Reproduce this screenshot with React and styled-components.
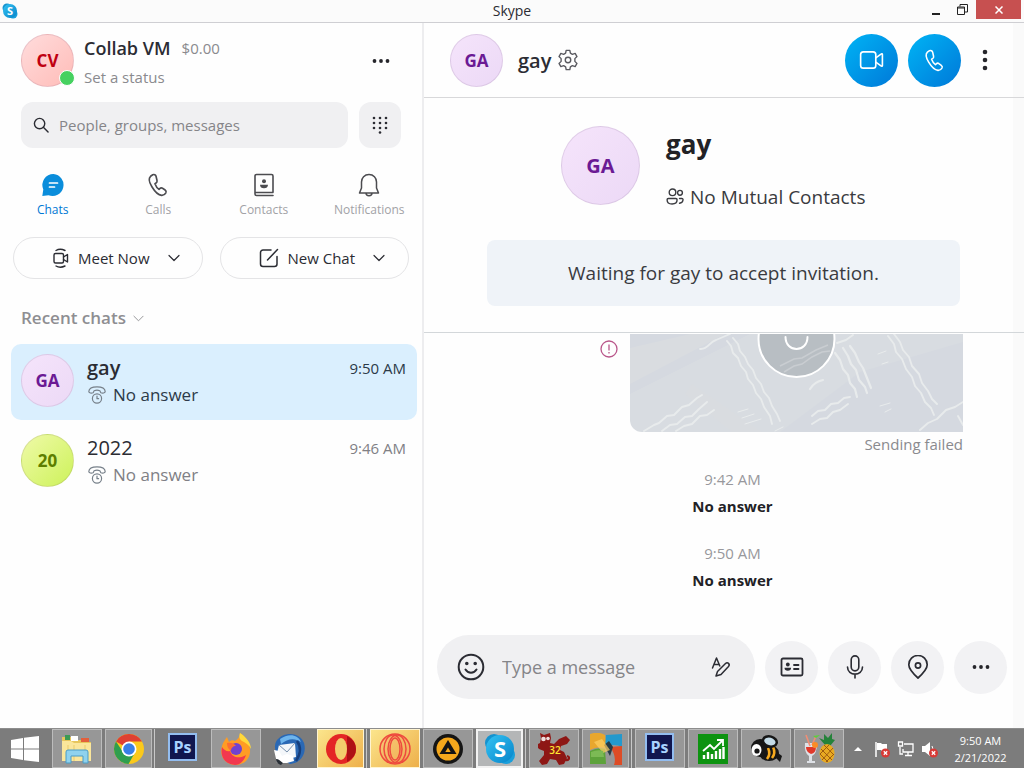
import React from "react";
import styled, { createGlobalStyle, css } from "styled-components";

const GlobalStyle = createGlobalStyle`
  *, *::before, *::after { box-sizing: border-box; }
  body {
    margin: 0;
    background: #fdfdfd;
    color: #2b2c33;
    font-family: "Open Sans", "Noto Sans", sans-serif;
    font-size: 14px;
  }
  button, input { font: inherit; color: inherit; }
  button { background: none; border: 0; padding: 0; cursor: pointer; }
  h1, h2, h3, p { margin: 0; font-weight: 400; }
  svg { display: block; flex: none; }
`;

const Desktop = styled.div`
  display: flex;
  flex-direction: column;
  min-height: 100vh;
`;

/* ---------- window frame ---------- */

const TitleBar = styled.header`
  display: grid;
  grid-template-columns: 1fr auto 1fr;
  align-items: center;
  height: 23px;
  background: #fbfbfb;
  border-bottom: 1px solid #cfcfd3;
`;
const AppMark = styled.div`
  padding-left: 2px;
`;
const WindowTitle = styled.h1`
  font-size: 14px;
  line-height: 22px;
`;
const WindowControls = styled.div`
  display: flex;
  justify-content: flex-end;
  align-self: start;
  padding-right: 3px;
`;
const WindowButton = styled.button`
  display: flex;
  align-items: center;
  justify-content: center;
  width: ${(p) => (p.$close ? 45 : 27)}px;
  height: 19px;
  color: ${(p) => (p.$close ? "#fff" : "#222")};
  background: ${(p) => (p.$close ? "#c75050" : "none")};
`;

const Workspace = styled.div`
  flex: 1;
  display: grid;
  grid-template-columns: 424px minmax(0, 1fr);
`;

/* ---------- shared ---------- */

const tones = {
  red: css`
    background: linear-gradient(135deg, #ffdcdc, #ffbcb8);
    color: #bf0011;
  `,
  purple: css`
    background: linear-gradient(135deg, #f5e4fb, #ecd9f6);
    color: #6b1a94;
  `,
  lime: css`
    background: linear-gradient(135deg, #effaa8, #cdf25a);
    color: #5d7e00;
  `,
};
const Avatar = styled.div`
  position: relative;
  flex: none;
  display: flex;
  align-items: center;
  justify-content: center;
  width: ${(p) => (p.$large ? 79 : 53)}px;
  height: ${(p) => (p.$large ? 79 : 53)}px;
  border-radius: 50%;
  border: 1px solid rgba(90, 60, 110, 0.12);
  font-size: ${(p) => (p.$large ? 20 : 17)}px;
  font-weight: 700;
  ${(p) => tones[p.$tone]}
`;
const Presence = styled.span`
  position: absolute;
  right: -2px;
  bottom: 0;
  width: 16px;
  height: 16px;
  border-radius: 50%;
  border: 1px solid #fff;
  background: #46d160;
`;
const IconButton = styled.button`
  display: flex;
  align-items: center;
  justify-content: center;
  width: ${(p) => p.$w || 32}px;
  height: ${(p) => p.$h || 32}px;
`;

/* ---------- sidebar ---------- */

const Sidebar = styled.aside`
  border-right: 2px solid #ededef;
  background: #fefefe;
`;
const Profile = styled.div`
  display: flex;
  align-items: flex-start;
  gap: 10px;
  padding: 11px 25px 10px 21px;
`;
const ProfileText = styled.div`
  flex: 1;
`;
const ProfileName = styled.div`
  display: flex;
  align-items: center;
  gap: 11px;
  height: 28px;
  line-height: 28px;
  font-size: 15px;
  color: #8a8a8e;
`;
const Strong = styled.span`
  font-size: 18px;
  font-weight: 600;
  color: #2b2c33;
`;
const StatusButton = styled.button`
  display: block;
  line-height: 30px;
  font-size: 15px;
  color: #8a8a8e;
`;
const SearchRow = styled.form`
  display: flex;
  gap: 11px;
  padding: 0 21px;
`;
const SearchBox = styled.label`
  flex: 1;
  display: flex;
  align-items: center;
  gap: 10px;
  height: 46px;
  padding: 0 12px;
  border-radius: 12px;
  background: #f0f0f2;
`;
const TextInput = styled.input`
  flex: 1;
  min-width: 0;
  padding: 0;
  border: 0;
  outline: 0;
  background: none;
  font-size: ${(p) => (p.$large ? 18 : 15)}px;
  &::placeholder { color: #858589; opacity: 1; }
`;
const DialButton = styled(IconButton)`
  border-radius: 12px;
  background: #f0f0f2;
`;
const Tabs = styled.nav`
  display: grid;
  grid-template-columns: repeat(4, 1fr);
  padding-top: 25px;
`;
const Tab = styled.button`
  display: flex;
  flex-direction: column;
  align-items: center;
  gap: 4px;
  font-size: 12px;
  line-height: 18px;
  color: ${(p) => (p.$active ? "#0078d4" : "#a2a2a6")};
  svg { color: #4c4c50; }
`;
const Actions = styled.div`
  display: grid;
  grid-template-columns: 1fr 1fr;
  gap: 17px;
  padding: 18px 13px 0;
`;
const PillButton = styled.button`
  display: flex;
  align-items: center;
  justify-content: center;
  height: 42px;
  padding-left: 16px;
  border: 1px solid #e4e4e6;
  border-radius: 21px;
  font-size: 15px;
  gap: 8px;
  svg:last-child { margin-left: 10px; }
`;
const SectionButton = styled.button`
  display: flex;
  align-items: center;
  gap: 7px;
  margin: 26px 0 0 21px;
  line-height: 26px;
  font-size: 17px;
  font-weight: 600;
  color: #8e8e92;
`;
const ChatList = styled.ul`
  display: flex;
  flex-direction: column;
  gap: 4px;
  margin: 13px 5px 0 11px;
  padding: 0;
  list-style: none;
`;
const ChatRow = styled.button`
  display: flex;
  gap: 13px;
  width: 100%;
  height: 76px;
  padding: 10px 11px 0 10px;
  border-radius: 10px;
  text-align: left;
  color: ${(p) => (p.$active ? "#2c3a48" : "#808085")};
  background: ${(p) => (p.$active ? "#daeffe" : "none")};
`;
const ChatBody = styled.div`
  flex: 1;
`;
const ChatName = styled.div`
  font-size: 20px;
  line-height: 28px;
  font-weight: ${(p) => (p.$active ? 600 : 400)};
  color: #2b2c33;
`;
const ChatNote = styled.div`
  display: flex;
  align-items: center;
  gap: 7px;
  line-height: 25px;
  font-size: 17px;
  svg { color: #77808a; margin-left: 1px; }
`;
const ChatTime = styled.time`
  line-height: 28px;
  font-size: 15px;
`;

/* ---------- conversation ---------- */

const Conversation = styled.main`
  display: flex;
  flex-direction: column;
  background: linear-gradient(to left, #fafafa 11px, #fefefe 11px);
`;
const ChatHeader = styled.div`
  display: flex;
  align-items: center;
  gap: 10px;
  height: 75px;
  padding: 0 26px;
  border-bottom: 1px solid #d8d8da;
`;
const Contact = styled.h2`
  flex: 1;
  display: flex;
  align-items: center;
  gap: 6px;
  padding-left: 5px;
  font-size: 20px;
  font-weight: 600;
  svg { color: #5a5a60; }
`;
const CallButton = styled.button`
  display: flex;
  align-items: center;
  justify-content: center;
  width: 53px;
  height: 53px;
  border-radius: 50%;
  color: #fff;
  background: linear-gradient(135deg, #00b4f5, #0078d8);
`;
const Intro = styled.section`
  display: flex;
  flex-direction: column;
  gap: 26px;
  padding: 28px 64px 26px 63px;
  border-bottom: 1px solid #d3d7da;
`;
const IntroCard = styled.div`
  display: flex;
  gap: 26px;
  padding-left: 74px;
`;
const IntroName = styled.h2`
  font-size: 26px;
  line-height: 36px;
  font-weight: 700;
  color: #222226;
`;
const Mutual = styled.p`
  display: flex;
  align-items: center;
  gap: 6px;
  padding-top: 18px;
  font-size: 19px;
  line-height: 34px;
  color: #3a3b40;
`;
const Banner = styled.p`
  height: 66px;
  border-radius: 8px;
  background: #eff3f8;
  text-align: center;
  font-size: 19px;
  line-height: 66px;
  color: #3a3b40;
`;
const Messages = styled.section`
  flex: 1;
  padding: 1px 61px 0 0;
`;
const Failed = styled.div`
  display: flex;
  justify-content: flex-end;
  gap: 12px;
  svg:first-child { margin-top: 6px; }
`;
const MapCard = styled.div`
  width: 333px;
  height: 98px;
  overflow: hidden;
  border-bottom-left-radius: 12px;
  background: #d8dce1;
  && svg { margin-top: 0; }
`;
const FailedText = styled.p`
  text-align: right;
  font-size: 15px;
  line-height: 24px;
  color: #8a8a8e;
`;
const CallEvent = styled.div`
  padding: ${(p) => (p.$first ? 10 : 20)}px 0 0 78px;
  text-align: center;
  font-size: 15px;
  line-height: 27px;
  color: #98989c;
  strong { display: block; color: #222226; }
`;
const Composer = styled.form`
  display: flex;
  align-items: center;
  gap: 10px;
  padding: 0 17px 29px 13px;
`;
const MessageBox = styled.div`
  flex: 1;
  min-width: 0;
  display: flex;
  align-items: center;
  gap: 15px;
  height: 64px;
  padding: 0 18px;
  border-radius: 32px;
  background: #f0f0f2;
`;
const RoundButton = styled(IconButton)`
  width: 53px;
  height: 53px;
  border-radius: 50%;
  background: #f2f2f4;
`;

/* ---------- taskbar ---------- */

const Taskbar = styled.footer`
  display: flex;
  align-items: stretch;
  height: 40px;
  background: #7c7c7c;
  border-top: 1px solid #8d8d8d;
  color: #fff;
`;
const StartButton = styled.button`
  display: flex;
  align-items: center;
  justify-content: center;
  width: 50px;
  margin-right: 2px;
`;
const Apps = styled.div`
  display: flex;
  gap: 3px;
`;
const faces = {
  plain: css`
    background: transparent;
  `,
  open: css`
    background: #979797;
    border: 1px solid #bcbcbc;
  `,
  alert: css`
    background: linear-gradient(135deg, #fbe58c, #eeb04a);
    border: 1px solid #fff4d0;
  `,
  active: css`
    background: #b4b6b7;
    border: 2px solid #f2f2f2;
  `,
};
const AppSlot = styled.div`
  display: flex;
  width: 50px;
  ${(p) =>
    p.$stacked &&
    css`
      padding-right: 2px;
      border-right: 1px solid #c8c8c8;
    `}
`;
const AppButton = styled.button`
  flex: 1;
  display: flex;
  align-items: center;
  justify-content: center;
  ${(p) => faces[p.$face]}
`;
const Tray = styled.div`
  display: flex;
  align-items: center;
  gap: 6px;
  margin-left: auto;
  padding-right: 17px;
  svg:first-child { margin-right: 4px; }
`;
const Clock = styled.time`
  width: 53px;
  margin-left: 9px;
  white-space: nowrap;
  display: flex;
  flex-direction: column;
  align-items: center;
  font-size: 11px;
  line-height: 17px;
`;

/* ---------- icons ---------- */

const Line = ({ size = 24, w, h, box, sw = 1.5, children }) => (
  <svg width={w || size} height={h || size} viewBox={box || "0 0 24 24"} fill="none" stroke="currentColor"
    strokeWidth={sw} strokeLinecap="round" strokeLinejoin="round" aria-hidden="true">
    {children}
  </svg>
);
const handset =
  "M7.2 2.6 5.2 4C3.4 5.6 4 9.6 6.4 13.6c2.6 4.3 6 7.6 8.9 7.9 1.7.1 3.200-1 3.900-2.300.5-1 .1-2-.7-2.600l-2.300-1.600c-.8-.6-1.900-.4-2.600.3l-.7.7c-1.500-1-3-3.300-3.700-5.200l1-.6c.8-.5 1.100-1.400.9-2.300l-.9-3.900c-.3-1.200-1.700-2-3-1.400Z";
const HandsetIcon = ({ size, box }) => (
  <Line size={size} box={box}><path d={handset} /></Line>
);
const Dots = ({ vertical }) => (
  <svg width="22" height="22" viewBox="0 0 22 22" fill="#26262b" aria-hidden="true">
    {[3, 11, 19].map((c) => (
      <circle key={c} cx={vertical ? 11 : c} cy={vertical ? c : 11} r="2.3" />
    ))}
  </svg>
);
const SmallDots = () => (
  <svg width="20" height="20" viewBox="0 0 20 20" fill="#26262b" aria-hidden="true">
    {[3.5, 10, 16.5].map((c) => <circle key={c} cx={c} cy="10" r="1.9" />)}
  </svg>
);
const Chevron = ({ size = 12, sw = 1.2 }) => (
  <Line size={size} box="0 0 12 12" sw={sw}><path d="m1 3.500 5 5 5-5" /></Line>
);
const SkypeMark = ({ size }) => (
  <svg width={size} height={size} viewBox="0 0 32 32" aria-hidden="true">
    <defs>
      <linearGradient id="sky" x1="0" y1="0" x2="1" y2="1">
        <stop offset="0" stopColor="#35c3f3" />
        <stop offset="1" stopColor="#0583c9" />
      </linearGradient>
    </defs>
    <circle cx="10" cy="10" r="9" fill="#1593cf" />
    <circle cx="22" cy="22" r="9" fill="#1a9fdb" />
    <circle cx="16" cy="16" r="14" fill="url(#sky)" />
    <text x="16" y="24" textAnchor="middle" fontSize="22" fontWeight="700" fill="#fff">S</text>
  </svg>
);
const DialPad = () => (
  <svg width="16" height="18" viewBox="0 0 16 18" fill="#2b2c33" aria-hidden="true">
    {[2, 7, 12].map((y) => [2, 8, 14].map((x) => <circle key={`${x}-${y}`} cx={x} cy={y} r="1.300" />))}
    <circle cx="8" cy="16.500" r="1.300" />
  </svg>
);
const ChatsIcon = () => (
  <svg width="24" height="24" viewBox="0 0 24 24" aria-hidden="true">
    <path d="M12.500 1A11 11 0 1 1 7.500 22.200L1.300 23l1-6.500A11 11 0 0 1 12.500 1Z" fill="#0a8ddb" />
    <path d="M8.500 10h8M8.500 14h5" stroke="#fff" strokeWidth="1.700" strokeLinecap="round" />
  </svg>
);
const ContactsIcon = () => (
  <Line sw={1.6}>
    <path d="M21 19V3a1.500 1.500 0 0 0-1.500-1.500h-15A1.500 1.500 0 0 0 3 3v18a1.500 1.500 0 0 0 1.500 1.500H21M3 19.500h18" />
    <circle cx="12" cy="8.300" r="2" fill="currentColor" stroke="none" />
    <path d="M8 11.800h8c0 2.500-1.600 3.500-4 3.500s-4-1-4-3.500Z" fill="currentColor" stroke="none" />
  </Line>
);
const BellIcon = () => (
  <Line>
    <path d="M12 1.500c-4.500 0-7.500 3.500-7.500 7.500v6L2.500 20h19l-2-5V9c0-4-3-7.500-7.500-7.500ZM9 20c0 3.500 6 3.500 6 0" />
  </Line>
);
const MeetIcon = () => (
  <Line w={18} h={20} box="0 0 18 20" sw={1.4}>
    <rect x="2" y="5.500" width="9.500" height="9.500" rx="1.500" />
    <path d="m11.500 9 4-2.500v7.500l-4-2.500M4 2.500c2.500-1.500 6-1.500 9 0M4 18c2.500 1.500 6 1.500 9 0" />
  </Line>
);
const ComposeIcon = () => (
  <Line size={20} box="0 0 20 20" sw={1.5}>
    <path d="M12 2H4a2.500 2.500 0 0 0-2.500 2.500V16A2.500 2.500 0 0 0 4 18.500h11.500A2.500 2.500 0 0 0 18 16V8.500M8.500 12 18.500 1.500" />
  </Line>
);
const MissedIcon = () => (
  <Line w={18} h={18} box="0 0 18 18" sw={1.2}>
    <path d="M.8 5.500C1 2.500 4.500.8 9 .8s8 1.700 8.200 4.700c0 1.500-2.700 2-4.200 1.200-.8-.5-.6-1.700-1.200-2-1.600-.6-4-.6-5.600 0-.6.300-.4 1.500-1.200 2-1.500.8-4.200.3-4.200-1.200Z" />
    <circle cx="9" cy="12.500" r="4.600" />
    <path d="M9 10.200v2.500h1.600" />
  </Line>
);
const GearIcon = () => (
  <Line size={22} sw={1.5}>
    <path d="m10 1.500-.6 3-2.200 1.300-3-1-2 3.500L4.500 10.500v3L2.200 15.700l2 3.500 3-1 2.200 1.300.6 3h4l.6-3 2.200-1.300 3 1 2-3.500-2.300-2.200v-3l2.300-2.200-2-3.500-3 1-2.200-1.300-.6-3Z" />
    <circle cx="12" cy="12" r="3" />
  </Line>
);
const CameraIcon = () => (
  <Line size={26} sw={1.5}>
    <rect x="1.500" y="4.500" width="14" height="15" rx="2.500" />
    <path d="m15.500 10 4.800-3.500c.6-.5 1.300-.2 1.300.5v10c0 .7-.7 1-1.300.5L15.500 14" />
  </Line>
);
const PeopleIcon = () => (
  <Line w={18} h={18} box="0 0 18 18" sw={1.4}>
    <circle cx="6.500" cy="4.300" r="3.300" /><circle cx="14" cy="4.800" r="2.400" />
    <path d="M2.300 10.500h7.500a1.300 1.300 0 0 1 1.300 1.300c0 2.800-1.600 4.200-5 4.200s-5-1.400-5-4.200c0-.8.500-1.300 1.200-1.300ZM13.500 10.500h2.300c.8 0 1.400.6 1.200 1.500-.2 2.100-1.200 3-3.500 3.200" />
  </Line>
);
const SmileIcon = () => (
  <Line size={30} box="0 0 30 30" sw={2}>
    <circle cx="15" cy="15" r="12.300" />
    <path d="M9.500 17.500c2.600 4.300 8.400 4.300 11 0" />
    <circle cx="10.800" cy="11.500" r=".8" fill="currentColor" /><circle cx="19.200" cy="11.500" r=".8" fill="currentColor" />
  </Line>
);
const FormatIcon = () => (
  <Line size={22} box="0 0 22 22" sw={1.5}>
    <path d="m2.500 12 4-10 3.300 8M4 8.500h4.800M6 20l1.500-4.500 8-8c2-2 5 .6 3 3l-7.500 8L6 20Z" />
  </Line>
);
const CardIcon = () => (
  <Line size={26} box="0 0 26 26" sw={1.8}>
    <rect x="2.500" y="4.500" width="21" height="17" rx="1.500" />
    <path d="M15 11h4.500M15 15h4.500" />
    <circle cx="8.800" cy="10.500" r="1.900" fill="currentColor" stroke="none" />
    <path d="M5.500 13.800h6.600c0 2.300-1.300 3-3.300 3s-3.300-.7-3.300-3Z" fill="currentColor" stroke="none" />
  </Line>
);
const MicIcon = () => (
  <Line sw={1.6}>
    <rect x="8.200" y=".9" width="7.600" height="15" rx="3.800" />
    <path d="M4.500 12c0 9.500 15 9.500 15 0M12 19.500V23" />
  </Line>
);
const PinIcon = () => (
  <Line sw={1.7}>
    <path d="M12 23C6 17.500 2.800 14 2.800 9.700a9.200 9.200 0 0 1 18.400 0C21.200 14 18 17.500 12 23Z" />
    <circle cx="12" cy="10.500" r="2.600" />
  </Line>
);

const MapArt = () => (
  <svg width="333" height="98" viewBox="0 0 333 98" fill="none" aria-hidden="true">
    <path d="M0 0h120L0 60ZM150 98l80-60 103-30v90Z" fill="#d5d9e0" />
    <path d="M0 14 60 0h35L0 50ZM62 50l70 48h-30L55 60Z" fill="#d9dce0" />
    <g stroke="#e8ebec" strokeWidth="1.900" strokeLinecap="round" strokeLinejoin="round">
      <path d="m14 97 10-6 5-2 8-7 7-1 8-8 7-2 8-7 5-3M32 97l8-6 7-1 8-7 7-1 7-7 8-7M46 97l8-5 8-2 8-8 7-1 7-5M70 15c8 1 9-7 16-9l14-6" />
      <path d="m97 7 4 5 2 7 5 5 3 8 5 6 2 7 5 6 3 8 5 6 3 8 6 9 2 8M103 4l5 6 2 7 5 6 3 7 5 6 3 8 5 6 3 8 5 6 3 8 5 8 3 7M258 2l6 8 2 8 6 7 4 10 6 8 3 9 6 7 4 9 6 6 3 7M264 0l6 8 3 8 6 7 3 9 7 8 3 9 6 8 4 8 5 5" />
      <path d="m205 19 5 7 3 9 5 6 2 8 5 6 2 8M213 14l5 8 3 8 5 6 3 10 6 7 2 6M220 12l5 7 4 9 4 6 4 10 4 10M180 55c3-5 8-8 13-9" strokeWidth="2.200" />
      <path d="m182 82 6-5 7-1 6-6 7-1 6-5 6-1M182 90l8-5 7-1 6-6 7-2 8-6M290 96l8-7 9-4 9-9 9-3 8-5M328 82l5 9" />
      <path d="m207 9 9-3 7-5" />
      <path d="m145 97 8-4M108 78l10-3M112 84l12-4M115 90l16-5M248 20l8-3M252 30l6-2M250 72l10-3M255 78l6-3" strokeWidth="1" />
    </g>
    <circle cx="166.500" cy="5" r="38" fill="#b0b6bc" fillOpacity=".8" stroke="#fff" strokeWidth="2" />
    <path d="m154 38 10-6 8-2 10-7 10-5 8-1M150 32l14-7 8-1 14-8 12-5" stroke="#c9cdd1" strokeWidth="1.500" />
    <path d="M155.500 3c0 16 22 16 22 0" stroke="#fff" strokeWidth="2" strokeLinecap="round" />
  </svg>
);

/* taskbar drawings, all on a 32 unit canvas */
const Art = ({ children }) => (
  <svg width="32" height="32" viewBox="0 0 32 32" aria-hidden="true">{children}</svg>
);
const PsArt = () => (
  <Art>
    <rect x="1" y="0" width="29" height="28" fill="#93bdf0" />
    <rect x="3" y="2" width="25" height="24" fill="#10164f" />
    <text x="15.500" y="20" textAnchor="middle" fontSize="16" fontWeight="700" fill="#a8d2ff">Ps</text>
  </Art>
);
const FolderArt = () => (
  <Art>
    <path d="M1 4h9l2 3h9l1 2h8v19H1Z" fill="#e6c65d" />
    <path d="M4 2h5v5H4Z" fill="#3b9a54" /><path d="M10 3h7v5h-7Z" fill="#fff" /><path d="M20 5h8v4h-8Z" fill="#e35f3b" />
    <path d="M1 8h9l3 2h17v18H1Z" fill="#fae69b" /><path d="M7 12v16M13 12v16M24 12v16" stroke="#eacb6a" />
    <path d="M5 30V19q0-2 2-2h18q2 0 2 2v11h-5v-7H10v7Z" fill="#8fd2ee" stroke="#4a9cc6" />
  </Art>
);
const ChromeArt = () => (
  <Art>
    <circle cx="16" cy="16" r="15" fill="#fbc91b" />
    <path d="M16 16 3 8.500A15 15 0 0 1 29 8.500H16Z" fill="#df4032" />
    <path d="M3 8.500A15 15 0 0 0 15.500 31L22 19.500 16 16 10 19Z" fill="#2f9e4e" />
    <circle cx="16" cy="16" r="7.500" fill="#fff" /><circle cx="16" cy="16" r="5.800" fill="#397fe5" />
  </Art>
);
const FirefoxArt = () => (
  <Art>
    <path d="M20 0c5 3 5 6 8 10 5 9 1 21-12 22C5 32-1 23 2 13c1-4 3-6 5-9l2 5c2-2 4-2 6-1 3-2 5-4 5-8Z" fill="#ff9c24" />
    <path d="M2 14c2 3 5 5 8 4 2 7 10 8 16 4-2 6-6 10-11 10C5 31 0 24 2 14Z" fill="#f2384f" />
    <path d="M20 0c6 4 11 10 11 16-2-4-5-6-9-8-3-2-3-5-2-8Z" fill="#ffd93b" />
    <circle cx="16" cy="16" r="6" fill="#7241cf" />
    <path d="M7 10c4-1 7 0 9 3-3 0-5 2-5 5-3-2-4-5-4-8Z" fill="#fd6d33" />
  </Art>
);
const BirdArt = () => (
  <Art>
    <path d="M4 7C11-2 27-1 31 10c3 10-3 20-14 21L8 26c-6-5-8-13-4-19Z" fill="#2a68b4" />
    <path d="M7 6c8-6 18-5 21 3-6-4-13-4-20 2Z" fill="#6eb5ed" />
    <path d="m6 12 16-2 1 14-12 3-8-3Z" fill="#f4f7fa" /><path d="m6 12 8 7 8-9" fill="none" stroke="#7890ac" />
    <path d="m1 17 5 1 3 5 5-2 6 2 1 5-7 2H4Z" fill="#fff" />
    <path d="M3 26c3 0 4 2 7 4l-2 2c-3-1-5-3-5-6Z" fill="#292f36" />
    <path d="M24 8c5 7 3 14-1 20" fill="none" stroke="#163e7c" strokeWidth="2.500" />
  </Art>
);
const OperaArt = () => (
  <Art>
    <ellipse cx="16" cy="16" rx="15" ry="15" fill="#e42525" />
    <path d="M22 3q9 5 9 13t-9 13Z" fill="#ae1015" />
    <ellipse cx="16" cy="16" rx="6" ry="11" fill="#f3cc6c" />
  </Art>
);
const OperaGxArt = () => (
  <Art>
    <g fill="none" stroke="#ee4a3e" strokeWidth="1.500">
      <circle cx="16" cy="16" r="15" fill="#f29b58" fillOpacity=".3" />
      <ellipse cx="14" cy="16" rx="9" ry="14" /><ellipse cx="18" cy="16" rx="9" ry="14" />
      <ellipse cx="16" cy="16" rx="5" ry="11" />
    </g>
  </Art>
);
const AimpArt = () => (
  <Art>
    <circle cx="16" cy="16" r="15" fill="#151515" /><circle cx="16" cy="16" r="11.500" fill="#f5a81c" />
    <path d="m16 7 8.500 14h-17Z" fill="#151515" /><path d="m16 14.500 2.700 4.500h-5.400Z" fill="#f5a81c" />
  </Art>
);
const CatArt = () => (
  <Art>
    <path d="m2 0 4 2 6-2 1 5-1 5 4 1 5-5 7-3 4 4-3 4-6 2-1 4 4 2 3 6-3 6-5 1-3-5-6-1-3 5-5 1-3-4 5-6 0-4-5-2-3-4 4-2 1-5Z" fill="#8e1715" />
    <circle cx="5.500" cy="6" r="2.300" fill="#eddedd" /><circle cx="10" cy="5.500" r="1.800" fill="#eddedd" />
    <path d="M25 26c6 3 8-2 4-3" fill="none" stroke="#8e1715" strokeWidth="2.200" />
    <text x="17" y="21" textAnchor="middle" fontSize="10" fontWeight="600" fill="#ffe631">32</text>
  </Art>
);
const BlocksArt = () => (
  <Art>
    <path d="M0 1q8-3 15 1l2 13Q7 13 0 17Z" fill="#e8a72e" /><path d="m16 2 16-1v13q-8-4-17 0Z" fill="#2399cd" />
    <path d="M0 18q8-4 15-2l1 15H0Z" fill="#5da23b" /><path d="m20 14 12-1v19h-8q3-9-4-18Z" fill="#dd4c26" />
    <path d="m14 12 5-4 4 6-3 9Z" fill="#253b45" /><path d="m4 9 8-3 8 11-7 3Z" fill="#ffd064" fillOpacity=".7" />
    <path d="M1 19q7-3 12-1l1 6H1Z" fill="#7cba55" />
  </Art>
);
const ChartArt = () => (
  <Art>
    <rect x="1" y="1" width="30" height="30" fill="#0d9310" />
    <path d="M7 26v-4M11 26v-7M15 26v-5M19 26v-8M23 26V16M26.500 26V14" stroke="#fff" strokeWidth="2.400" />
    <path d="m6 18 7-6 4 4 8-8M20 7h6v6" fill="none" stroke="#fff" strokeWidth="1.800" />
  </Art>
);
const BeeArt = () => (
  <Art>
    <ellipse cx="19" cy="20" rx="10" ry="8" fill="#161616" /><circle cx="10" cy="15" r="9" fill="#161616" />
    <ellipse cx="6.500" cy="17" rx="5" ry="6" fill="#fff" /><circle cx="7" cy="18" r="2.600" fill="#161616" />
    <path d="M18 15q3 6-1 11M23 14q3 6-1 11" stroke="#f5a91e" strokeWidth="2.600" fill="none" />
    <ellipse cx="20" cy="8.500" rx="7" ry="5" fill="#c4dbe7" stroke="#161616" strokeWidth="2.500" transform="rotate(15 20 8)" />
    <path d="m28 20 4 3-2 6-4-4Z" fill="#161616" />
  </Art>
);
const FruitArt = () => (
  <Art>
    <path d="m22 12-6-7 5 2 0-6 4 4 4-5v6l3 1-5 6Z" fill="#25823a" />
    <ellipse cx="24" cy="20.500" rx="7.500" ry="9.500" fill="#e8aa22" />
    <path d="m18 16 11 11M17 21l8 8M21 12l10 10M30 15 19 27M31 21l-8 8M26 12l-9 9" stroke="#95540d" strokeWidth=".9" />
    <path d="M2 10h12q0 11-5 13v5h3v2H4v-2h2v-5Q1 20 2 10Z" fill="#e6e9ee" fillOpacity=".9" />
    <path d="M3 14h10q0 6-5 7-5-2-5-7Z" fill="#e0392b" /><path d="m7 13-4-11M9 12l4-9" stroke="#f18e75" strokeWidth="1.600" />
    <circle cx="12" cy="12" r="3" fill="#fa8c28" /><path d="m10 3 7-1-4 3Z" fill="#5ad03b" />
  </Art>
);
const StartArt = () => (
  <svg width="28" height="26" viewBox="0 0 28 26" fill="#fff" aria-hidden="true">
    <path d="M0 4 12 2v10.500H0ZM13 1.800 28 0v12.500H13ZM0 13.500h12V24L0 22ZM13 13.500h15V26l-15-1.800Z" />
  </svg>
);
const RedBadge = () => (
  <>
    <circle cx="12.500" cy="13" r="4.500" fill="#d83a36" />
    <path d="m10.800 11.300 3.400 3.400m0-3.400-3.400 3.400" stroke="#fff" strokeWidth="1.300" />
  </>
);

const tabs = [
  { label: "Chats", icon: <ChatsIcon />, active: true },
  { label: "Calls", icon: <HandsetIcon size={24} box="1 1 22 22" /> },
  { label: "Contacts", icon: <ContactsIcon /> },
  { label: "Notifications", icon: <BellIcon /> },
];
const chats = [
  { name: "gay", initials: "GA", tone: "purple", time: "9:50 AM", active: true },
  { name: "2022", initials: "20", tone: "lime", time: "9:46 AM" },
];
const apps = [
  { name: "File Explorer", face: "open", art: <FolderArt /> },
  { name: "Chrome", face: "open", art: <ChromeArt />, stacked: true },
  { name: "Photoshop", face: "plain", art: <PsArt /> },
  { name: "Firefox", face: "open", art: <FirefoxArt /> },
  { name: "Thunderbird", face: "plain", art: <BirdArt /> },
  { name: "Opera", face: "alert", art: <OperaArt />, stacked: true },
  { name: "Opera GX", face: "alert", art: <OperaGxArt /> },
  { name: "AIMP", face: "open", art: <AimpArt /> },
  { name: "Skype", face: "active", art: <SkypeMark size={32} />, stacked: true },
  { name: "Cat", face: "open", art: <CatArt /> },
  { name: "Blocks", face: "open", art: <BlocksArt />, stacked: true },
  { name: "Photoshop files", face: "open", art: <PsArt /> },
  { name: "Charts", face: "open", art: <ChartArt /> },
  { name: "Bee", face: "open", art: <BeeArt /> },
  { name: "Fruit", face: "open", art: <FruitArt /> },
];

export default function App() {
  return (
    <Desktop>
      <GlobalStyle />
      <TitleBar>
        <AppMark><SkypeMark size={16} /></AppMark>
        <WindowTitle>Skype</WindowTitle>
        <WindowControls>
          <WindowButton aria-label="Minimize">
            <svg width="10" height="12" viewBox="0 0 10 12"><path d="M1 9h8v2H1Z" fill="currentColor" /></svg>
          </WindowButton>
          <WindowButton aria-label="Restore">
            <svg width="11" height="11" viewBox="0 0 11 11" fill="none" stroke="currentColor">
              <path d="M.5 3h7v7.500h-7ZM.5 4h7M3 2.500v-2h7.500V8H8" />
            </svg>
          </WindowButton>
          <WindowButton $close aria-label="Close">
            <svg width="8" height="8" viewBox="0 0 8 8"><path d="m.5.5 7 7m0-7-7 7" stroke="currentColor" strokeWidth="1.500" /></svg>
          </WindowButton>
        </WindowControls>
      </TitleBar>

      <Workspace>
        <Sidebar>
          <Profile>
            <Avatar $tone="red">CV<Presence /></Avatar>
            <ProfileText>
              <ProfileName><Strong>Collab VM</Strong>$0.00</ProfileName>
              <StatusButton>Set a status</StatusButton>
            </ProfileText>
            <IconButton $h={53} aria-label="More"><SmallDots /></IconButton>
          </Profile>
          <SearchRow>
            <SearchBox>
              <Line size={16} box="0 0 17 17" sw={1.5}><circle cx="7" cy="7" r="5.500" /><path d="m11 11 5 5" /></Line>
              <TextInput type="search" aria-label="Search" placeholder="People, groups, messages" />
            </SearchBox>
            <DialButton type="button" $w={42} $h={46} aria-label="Dial pad"><DialPad /></DialButton>
          </SearchRow>
          <Tabs>
            {tabs.map((t) => (
              <Tab key={t.label} $active={t.active}>{t.icon}{t.label}</Tab>
            ))}
          </Tabs>
          <Actions>
            <PillButton><MeetIcon />Meet Now<Chevron /></PillButton>
            <PillButton><ComposeIcon />New Chat<Chevron /></PillButton>
          </Actions>
          <SectionButton>Recent chats<Chevron size={11} sw={1} /></SectionButton>
          <ChatList>
            {chats.map((c) => (
              <li key={c.name}>
                <ChatRow $active={c.active}>
                  <Avatar $tone={c.tone}>{c.initials}</Avatar>
                  <ChatBody>
                    <ChatName $active={c.active}>{c.name}</ChatName>
                    <ChatNote><MissedIcon />No answer</ChatNote>
                  </ChatBody>
                  <ChatTime>{c.time}</ChatTime>
                </ChatRow>
              </li>
            ))}
          </ChatList>
        </Sidebar>

        <Conversation>
          <ChatHeader>
            <Avatar $tone="purple">GA</Avatar>
            <Contact>gay<GearIcon /></Contact>
            <CallButton aria-label="Video call"><CameraIcon /></CallButton>
            <CallButton aria-label="Audio call"><HandsetIcon size={25} /></CallButton>
            <IconButton $w={27} aria-label="More options"><Dots vertical /></IconButton>
          </ChatHeader>
          <Intro>
            <IntroCard>
              <Avatar $tone="purple" $large>GA</Avatar>
              <div>
                <IntroName>gay</IntroName>
                <Mutual><PeopleIcon />No Mutual Contacts</Mutual>
              </div>
            </IntroCard>
            <Banner>Waiting for gay to accept invitation.</Banner>
          </Intro>
          <Messages>
            <Failed>
              <svg width="18" height="18" viewBox="0 0 18 18" fill="none" stroke="#b9568a" strokeWidth="1.300">
                <circle cx="9" cy="9" r="8" /><path d="M9 4.500v6M9 12v1.500" />
              </svg>
              <MapCard><MapArt /></MapCard>
            </Failed>
            <FailedText>Sending failed</FailedText>
            <CallEvent $first>9:42 AM<strong>No answer</strong></CallEvent>
            <CallEvent>9:50 AM<strong>No answer</strong></CallEvent>
          </Messages>
          <Composer>
            <MessageBox>
              <IconButton type="button" aria-label="Emoji"><SmileIcon /></IconButton>
              <TextInput $large aria-label="Message" placeholder="Type a message" />
              <IconButton type="button" aria-label="Formatting"><FormatIcon /></IconButton>
            </MessageBox>
            <RoundButton type="button" aria-label="Send contact"><CardIcon /></RoundButton>
            <RoundButton type="button" aria-label="Record voice"><MicIcon /></RoundButton>
            <RoundButton type="button" aria-label="Share location"><PinIcon /></RoundButton>
            <RoundButton type="button" aria-label="More"><SmallDots /></RoundButton>
          </Composer>
        </Conversation>
      </Workspace>

      <Taskbar>
        <StartButton aria-label="Start"><StartArt /></StartButton>
        <Apps>
          {apps.map((a) => (
            <AppSlot key={a.name} $stacked={a.stacked}>
              <AppButton $face={a.face} aria-label={a.name}>{a.art}</AppButton>
            </AppSlot>
          ))}
        </Apps>
        <Tray>
          <svg width="10" height="6" viewBox="0 0 10 6" fill="#fff"><path d="m5 1 4 4H1Z" /></svg>
          <svg width="18" height="18" viewBox="0 0 18 18" fill="none">
            <path d="M3 2v15" stroke="#fff" strokeWidth="1.500" /><path d="M4 3h4l1 1h5v7H9L8 10H4Z" fill="#fff" /><RedBadge />
          </svg>
          <svg width="18" height="18" viewBox="0 0 18 18" fill="none" stroke="#fff" strokeWidth="1.300">
            <path d="M7 4h9v8H6V9M11 12v3M8 15.500h7M3 7v7h3M1.500 2h4v4h-4Z" />
          </svg>
          <svg width="18" height="18" viewBox="0 0 18 18" fill="none">
            <path d="M1 6h3l5-4v14l-5-4H1Z" fill="#fff" /><path d="M11 6q2 3 0 6" stroke="#fff" /><RedBadge />
          </svg>
          <Clock><span>9:50 AM</span><span>2/21/2022</span></Clock>
        </Tray>
      </Taskbar>
    </Desktop>
  );
}
